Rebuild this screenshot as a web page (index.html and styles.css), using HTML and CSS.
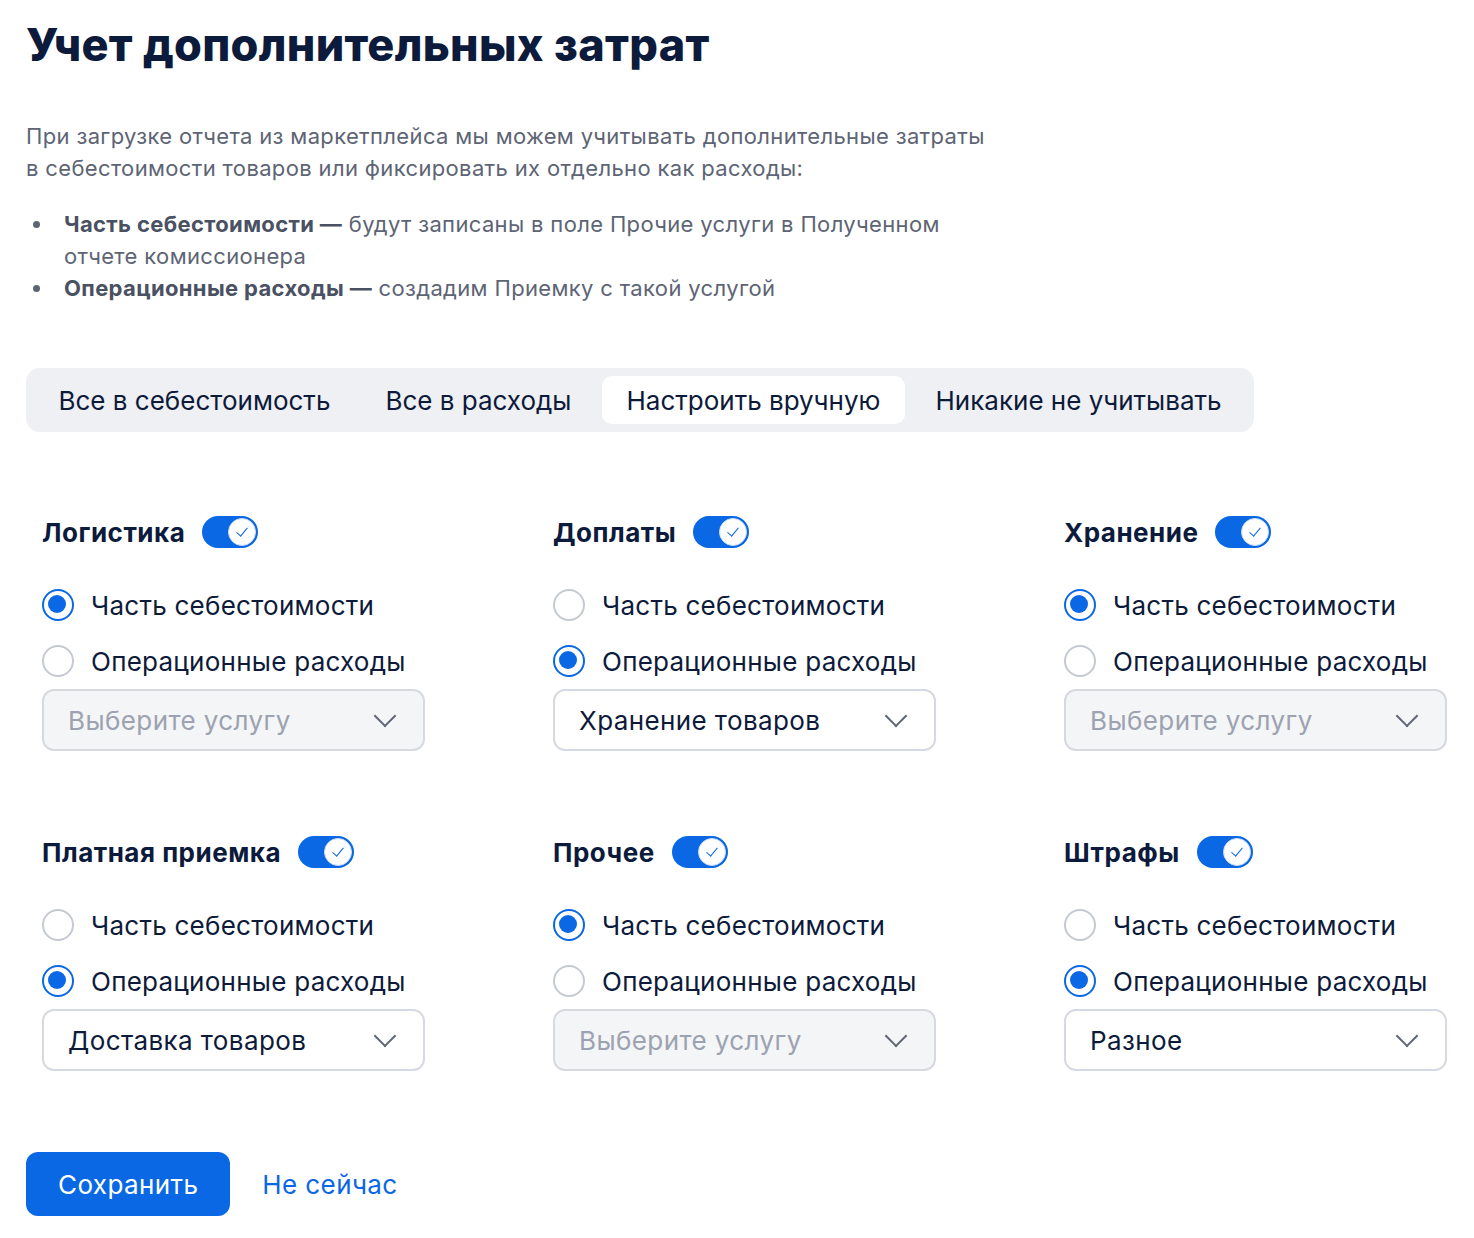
FILE: index.html
```html
<!DOCTYPE html>
<html lang="ru">
<head>
    <meta charset="UTF-8">
    <title>Учет дополнительных затрат</title>
    <link rel="stylesheet" href="styles.css">
</head>
<body>
    <div class="page">
        <h1 class="title">Учет дополнительных затрат</h1>

        <p class="intro">
            При загрузке отчета из маркетплейса мы можем учитывать дополнительные затраты<br>
            в себестоимости товаров или фиксировать их отдельно как расходы:
        </p>

        <ul class="notes">
            <li><b>Часть себестоимости —</b> будут записаны в поле Прочие услуги в Полученном<br>отчете комиссионера</li>
            <li><b>Операционные расходы —</b> создадим Приемку с такой услугой</li>
        </ul>

        <!-- Переключатель режима -->
        <div class="tabs">
            <button class="tab">Все в себестоимость</button>
            <button class="tab">Все в расходы</button>
            <button class="tab active">Настроить вручную</button>
            <button class="tab">Никакие не учитывать</button>
        </div>

        <!-- Статьи затрат -->
        <div class="costs">
            <div class="cost">
                <div class="cost-head">
                    <span class="cost-name">Логистика</span>
                    <span class="toggle"><span class="knob"></span></span>
                </div>
                <label class="radio"><span class="dot checked"></span>Часть себестоимости</label>
                <label class="radio"><span class="dot"></span>Операционные расходы</label>
                <div class="select disabled"><span>Выберите услугу</span><span class="chevron"></span></div>
            </div>

            <div class="cost">
                <div class="cost-head">
                    <span class="cost-name">Доплаты</span>
                    <span class="toggle"><span class="knob"></span></span>
                </div>
                <label class="radio"><span class="dot"></span>Часть себестоимости</label>
                <label class="radio"><span class="dot checked"></span>Операционные расходы</label>
                <div class="select"><span>Хранение товаров</span><span class="chevron"></span></div>
            </div>

            <div class="cost">
                <div class="cost-head">
                    <span class="cost-name">Хранение</span>
                    <span class="toggle"><span class="knob"></span></span>
                </div>
                <label class="radio"><span class="dot checked"></span>Часть себестоимости</label>
                <label class="radio"><span class="dot"></span>Операционные расходы</label>
                <div class="select disabled"><span>Выберите услугу</span><span class="chevron"></span></div>
            </div>

            <div class="cost">
                <div class="cost-head">
                    <span class="cost-name">Платная приемка</span>
                    <span class="toggle"><span class="knob"></span></span>
                </div>
                <label class="radio"><span class="dot"></span>Часть себестоимости</label>
                <label class="radio"><span class="dot checked"></span>Операционные расходы</label>
                <div class="select"><span>Доставка товаров</span><span class="chevron"></span></div>
            </div>

            <div class="cost">
                <div class="cost-head">
                    <span class="cost-name">Прочее</span>
                    <span class="toggle"><span class="knob"></span></span>
                </div>
                <label class="radio"><span class="dot checked"></span>Часть себестоимости</label>
                <label class="radio"><span class="dot"></span>Операционные расходы</label>
                <div class="select disabled"><span>Выберите услугу</span><span class="chevron"></span></div>
            </div>

            <div class="cost">
                <div class="cost-head">
                    <span class="cost-name">Штрафы</span>
                    <span class="toggle"><span class="knob"></span></span>
                </div>
                <label class="radio"><span class="dot"></span>Часть себестоимости</label>
                <label class="radio"><span class="dot checked"></span>Операционные расходы</label>
                <div class="select"><span>Разное</span><span class="chevron"></span></div>
            </div>
        </div>

        <div class="actions">
            <button class="save">Сохранить</button>
            <a class="later" href="#">Не сейчас</a>
        </div>
    </div>
</body>
</html>
```

FILE: styles.css
```css
body {
    margin: 0;
    padding: 0;
    background: #ffffff;
    font-family: Inter, "Noto Sans", sans-serif;
    color: #0d1a3a;
}

.page {
    padding: 18px 26px 0 26px;
}

.title {
    margin: 0;
    font-size: 45px;
    line-height: 54px;
    font-weight: 800;
    letter-spacing: 0.3px;
    color: #0c1a3c;
}

.intro {
    margin: 48px 0 0 0;
    font-size: 22px;
    line-height: 32px;
    letter-spacing: 0.35px;
    color: #5d6474;
}

.notes {
    margin: 24px 0 0 0;
    padding: 0 0 0 38px;
    list-style: none;
    font-size: 22px;
    line-height: 32px;
    letter-spacing: 0.35px;
    color: #5d6474;
}

.notes li {
    position: relative;
}

/* Маркер списка */
.notes li::before {
    content: "";
    position: absolute;
    left: -31px;
    top: 13px;
    width: 7px;
    height: 7px;
    border-radius: 50%;
    background-color: #5d6474;
}

.notes b {
    font-weight: 700;
    color: #4a5162;
}

/* Вкладки */
.tabs {
    display: inline-flex;
    gap: 6px;
    margin-top: 64px;
    padding: 8px;
    background-color: #eef0f4;
    border-radius: 14px;
}

.tab {
    padding: 0 24.5px;
    height: 48px;
    font-family: inherit;
    font-size: 26px;
    color: #0d1a3a;
    background: transparent;
    border: none;
    border-radius: 10px;
    cursor: pointer;
}

.tab.active {
    background-color: #ffffff;
}

/* Сетка статей */
.costs {
    display: grid;
    grid-template-columns: repeat(3, 383px);
    column-gap: 128px;
    row-gap: 85px;
    margin-top: 84px;
    padding-left: 16px;
}

.cost {
    display: flex;
    flex-direction: column;
}

.cost-head {
    display: flex;
    align-items: center;
    gap: 17px;
    height: 32px;
    margin-bottom: 29px;
}

.cost-name {
    font-size: 26px;
    font-weight: 700;
    letter-spacing: 0.5px;
    color: #0c1a3c;
}

.toggle {
    position: relative;
    width: 56px;
    height: 32px;
    border-radius: 16px;
    background-color: #0a68e4;
}

.toggle .knob {
    position: absolute;
    top: 2px;
    right: 2px;
    width: 26px;
    height: 26px;
    border-radius: 50%;
    background-color: #ffffff;
    border: 1px solid #c9dbf7;
}

.toggle .knob::after {
    content: "";
    position: absolute;
    left: 10px;
    top: 6px;
    width: 5px;
    height: 10px;
    border-right: 1.5px solid #0a68e4;
    border-bottom: 1.5px solid #0a68e4;
    transform: rotate(40deg);
}

.radio {
    display: flex;
    align-items: center;
    gap: 17px;
    height: 56px;
    font-size: 26px;
    letter-spacing: 0.25px;
    color: #0d1a3a;
    cursor: pointer;
}

.dot {
    position: relative;
    width: 28px;
    height: 28px;
    border-radius: 50%;
    border: 2px solid #c5c9d2;
    flex: 0 0 auto;
}

.dot.checked {
    border: 2.5px solid #0a68e4;
}

.dot.checked::after {
    content: "";
    position: absolute;
    top: 3.5px;
    left: 3.5px;
    width: 18px;
    height: 18px;
    border-radius: 50%;
    background-color: #0a68e4;
}

.select {
    display: flex;
    align-items: center;
    justify-content: space-between;
    height: 58px;
    padding: 0 24px 0 24px;
    border: 2px solid #d6d9e1;
    border-radius: 12px;
    font-size: 26px;
    letter-spacing: 0.4px;
    color: #0d1a3a;
    background-color: #ffffff;
}

.select.disabled {
    background-color: #f4f5f7;
    color: #9ca2b0;
}

.chevron {
    width: 14px;
    height: 14px;
    margin-right: 6px;
    margin-top: -8px;
    border-right: 2px solid #5e6577;
    border-bottom: 2px solid #5e6577;
    transform: rotate(45deg);
}

/* Кнопки */
.actions {
    display: flex;
    align-items: center;
    gap: 32px;
    margin-top: 81px;
}

.save {
    height: 64px;
    padding: 0 32px;
    font-family: inherit;
    font-size: 26px;
    letter-spacing: 0.4px;
    color: #ffffff;
    background-color: #0a68e4;
    border: none;
    border-radius: 12px;
    cursor: pointer;
}

.later {
    font-size: 26px;
    letter-spacing: 0.4px;
    color: #0a68e4;
    text-decoration: none;
}
```
